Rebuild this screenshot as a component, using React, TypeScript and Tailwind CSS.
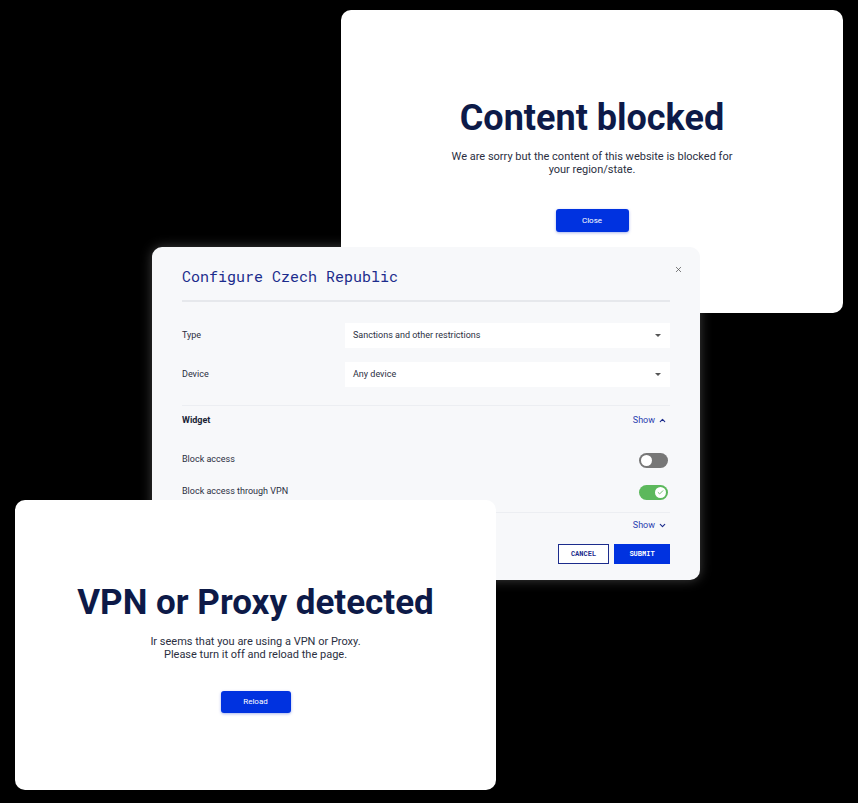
import { Check, ChevronDown, ChevronUp, X } from "lucide-react";

const sans = "font-['Roboto','Liberation_Sans',sans-serif]";
const mono = "font-['Roboto_Mono','DejaVu_Sans_Mono','Liberation_Mono',monospace]";

function Select({ value }: { value: string }) {
  return (
    <div className="flex h-[25px] w-[325px] items-center justify-between bg-white pl-2 pr-[9px] text-[9px] text-[#2b2f3f]">
      <span>{value}</span>
      <span className="h-0 w-0 border-x-[3px] border-t-[3px] border-x-transparent border-t-[#555]" />
    </div>
  );
}

function Toggle({ on }: { on: boolean }) {
  return (
    <div
      className={
        on
          ? "flex h-[15px] w-[29px] items-center justify-end rounded-full bg-[#5cb85c] px-[2px]"
          : "flex h-[15px] w-[29px] items-center justify-start rounded-full bg-[#777] px-[2px]"
      }
    >
      <div className="flex h-[11px] w-[11px] items-center justify-center rounded-full bg-white">
        {on && <Check size={7} strokeWidth={3} className="text-[#5cb85c]" />}
      </div>
    </div>
  );
}

export default function App() {
  return (
    <div className={`relative h-[803px] w-[858px] overflow-hidden bg-black ${sans}`}>
      {/* Content blocked window */}
      <div className="absolute left-[341px] top-[10px] flex h-[303px] w-[502px] flex-col items-center rounded-[10px] bg-white pt-[88px]">
        <h1 className="text-[36px] leading-[40px] font-bold text-[#0d1a48]">Content blocked</h1>
        <p className="mt-[12px] text-center text-[11px] leading-[13px] text-[#2b2f3f]">
          We are sorry but the content of this website is blocked for
          <br />
          your region/state.
        </p>
        <button className="mt-[33px] h-[23px] w-[73px] rounded-[3px] bg-[#0032e0] text-[8px] text-white shadow-[0_1px_3px_rgba(0,40,200,0.35)]">
          Close
        </button>
      </div>

      {/* Configure window */}
      <div className="absolute left-[152px] top-[247px] h-[333px] w-[548px] rounded-[10px] bg-[#f7f8fa] px-[30px] pt-[19px] shadow-[0_0_12px_rgba(255,255,255,0.25)]">
        <div className="flex items-start justify-between">
          <h2 className={`mt-[1px] text-[15px] leading-[18px] text-[#1c2c8c] ${mono}`}>Configure Czech Republic</h2>
          <X size={9} strokeWidth={2} className="mr-[-13px] mt-[-1px] text-[#555]" />
        </div>
        <div className="mt-[15px] h-[2px] bg-[#e6e8ec]" />

        <div className="mt-[21px] flex items-center">
          <span className="w-[163px] text-[9px] text-[#2b2f3f]">Type</span>
          <Select value="Sanctions and other restrictions" />
        </div>
        <div className="mt-[14px] flex items-center">
          <span className="w-[163px] text-[9px] text-[#2b2f3f]">Device</span>
          <Select value="Any device" />
        </div>
        <div className="mt-[18px] h-px bg-[#eceef2]" />

        <div className="mt-[8px] flex items-center justify-between">
          <span className="text-[9px] font-bold text-[#1a1f36]">Widget</span>
          <span className="mr-[3px] flex items-center gap-[3px] text-[9px] text-[#2a3fb0]">
            Show <ChevronUp size={9} strokeWidth={3} className="text-[#1c2c8c]" />
          </span>
        </div>
        <div className="mt-[25px] flex items-center justify-between pr-[2px]">
          <span className="text-[9px] text-[#2b2f3f]">Block access</span>
          <Toggle on={false} />
        </div>
        <div className="mt-[17px] flex items-center justify-between pr-[2px]">
          <span className="text-[9px] text-[#2b2f3f]">Block access through VPN</span>
          <Toggle on={true} />
        </div>
        <div className="mt-[12px] h-px bg-[#eceef2]" />

        <div className="mt-[6px] flex items-center justify-end">
          <span className="mr-[3px] flex items-center gap-[3px] text-[9px] text-[#2a3fb0]">
            Show <ChevronDown size={9} strokeWidth={3} className="text-[#1c2c8c]" />
          </span>
        </div>
        <div className={`mt-[12px] flex justify-end gap-[5px] ${mono}`}>
          <button className="h-[20px] w-[51px] border-[1.5px] border-[#1c2c8c] bg-white text-[7px] font-bold text-[#1c2c8c]">
            CANCEL
          </button>
          <button className="h-[20px] w-[56px] bg-[#0032e0] text-[7px] font-bold text-white">SUBMIT</button>
        </div>
      </div>

      {/* VPN window */}
      <div className="absolute left-[15px] top-[500px] flex h-[290px] w-[481px] flex-col items-center rounded-[10px] bg-white pt-[83px]">
        <h1 className="text-[35px] leading-[40px] font-bold text-[#0d1a48]">VPN or Proxy detected</h1>
        <p className="mt-[12px] text-center text-[11px] leading-[13px] text-[#2b2f3f]">
          Ir seems that you are using a VPN or Proxy.
          <br />
          Please turn it off and reload the page.
        </p>
        <button className="mt-[30px] h-[22px] w-[70px] rounded-[3px] bg-[#0032e0] text-[8px] text-white shadow-[0_1px_3px_rgba(0,40,200,0.35)]">
          Reload
        </button>
      </div>
    </div>
  );
}
